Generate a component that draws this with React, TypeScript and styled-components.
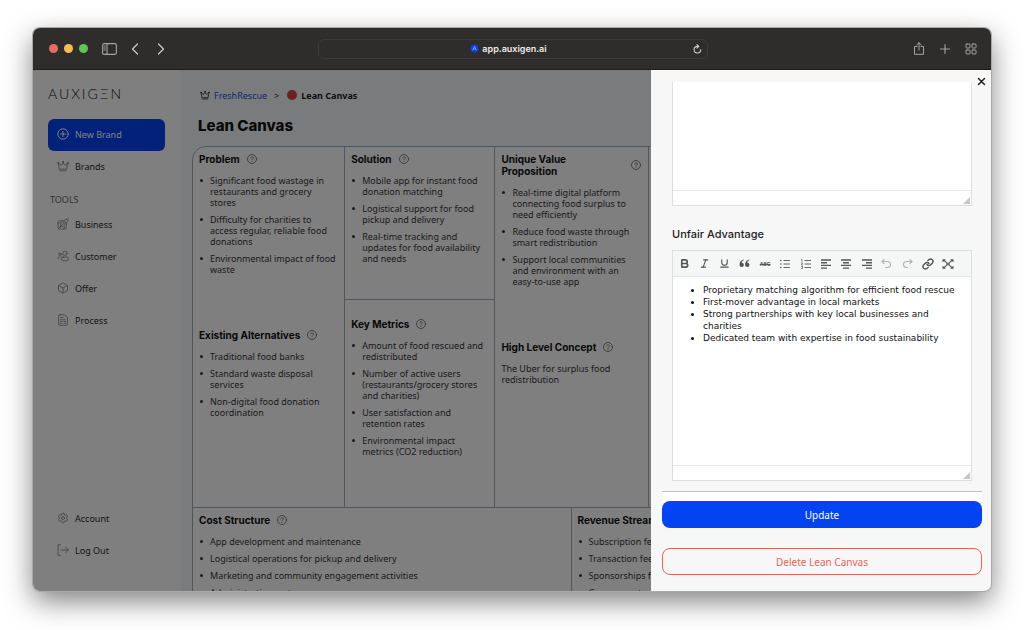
import React from "react";
import styled, { createGlobalStyle, css } from "styled-components";
import { Bold, Italic, Underline, Undo2, Redo2, Link as LinkIcon, Box, Settings } from "lucide-react";

const sans = `"Noto Sans", "Open Sans", sans-serif`;
const display = `Inter, "Noto Sans", sans-serif`;

const GlobalStyle = createGlobalStyle`
  *, *::before, *::after { box-sizing: border-box; }
  body { margin: 0; background: #fff; font-family: ${sans}; font-size: 9px; color: #363638; }
  button, input { font: inherit; color: inherit; }
  button { padding: 0; border: 0; background: none; cursor: pointer; }
  ul, h1, h2, p { margin: 0; padding: 0; }
`;

const Page = styled.div`
  display: flex;
  height: 100vh;
  padding: 28px 33px 39px;
  overflow: hidden;
`;

const Window = styled.div`
  flex: 1;
  min-width: 0;
  display: flex;
  flex-direction: column;
  border-radius: 7px;
  overflow: hidden;
  box-shadow: 0 0 0 1px #a9a9a9, 0 10px 28px rgba(0, 0, 0, 0.5);
`;

/* ---------- browser chrome ---------- */

const TitleBar = styled.header`
  flex: none;
  display: grid;
  grid-template-columns: 1fr 42% 1fr;
  align-items: center;
  height: 42px;
  padding: 0 14px 0 16px;
  background: #2f2d2b;
  border-bottom: 1px solid #1f1e1d;
  color: #a5a4a2;
`;

const ChromeGroup = styled.div<{ $end?: boolean }>`
  display: flex;
  align-items: center;
  gap: 14px;
  justify-content: ${(p) => (p.$end ? "flex-end" : "flex-start")};
`;

const History = styled.div`
  display: flex;
  gap: 18px;
`;

const Lights = styled.div`
  display: flex;
  gap: 6px;
`;

const Light = styled.span<{ $color: string }>`
  width: 9px;
  height: 9px;
  border-radius: 50%;
  background: ${(p) => p.$color};
`;

const ChromeButton = styled.button<{ $bright?: boolean }>`
  display: flex;
  color: ${(p) => (p.$bright ? "#cfcecd" : "#a5a4a2")};
`;

const AddressBar = styled.div`
  display: flex;
  align-items: center;
  height: 20px;
  padding: 0 5px;
  border: 1px solid #3c3b39;
  border-radius: 6px;
`;

const Address = styled.div`
  flex: 1;
  display: flex;
  align-items: center;
  justify-content: center;
  gap: 3px;
  font: 600 9px/12px ${display};
  color: #ececec;
`;

/* ---------- application shell ---------- */

const AppBody = styled.div`
  position: relative;
  flex: 1;
  min-height: 0;
  display: flex;
  background: #f2f6fb;
`;

const Sidebar = styled.aside`
  flex: none;
  display: flex;
  flex-direction: column;
  width: 148px;
  padding: 17px 16px 24px 15px;
  background: #fff;
`;

const Logo = styled.div`
  height: 14px;
  margin-bottom: 18px;
  font: 300 14px/14px Lato, ${sans};
  letter-spacing: 2px;
  color: #111;
`;

const NavItem = styled.a<{ $primary?: boolean }>`
  display: flex;
  align-items: center;
  gap: 6px;
  height: 32px;
  padding: 0 0 2px 9px;
  border-radius: 6px;
  text-decoration: none;
  color: #2a2a2a;
  ${(p) =>
    p.$primary &&
    css`
      background: #0442f5;
      color: #fff;
    `}
  svg {
    color: ${(p) => (p.$primary ? "#fff" : "#777")};
  }
`;

const NavLabel = styled.div`
  margin: 11px 0 3px;
  padding-left: 2px;
  line-height: 12px;
  color: #666;
`;

const Spacer = styled.div`
  flex: 1;
`;

const Main = styled.main`
  flex: 1;
  min-width: 0;
  overflow: hidden;
  padding: 18px 42px 0 11px;
`;

const Breadcrumb = styled.nav`
  display: flex;
  align-items: center;
  height: 14px;
  padding-left: 8px;
  gap: 4px;
  a {
    color: #2c4bdc;
    text-decoration: none;
  }
`;

const Separator = styled.span`
  padding: 0 4px 0 3px;
`;

const Dot = styled.span`
  width: 10px;
  height: 10px;
  border-radius: 50%;
  background: #d64045;
`;

const Crumb = styled.span`
  font-weight: 700;
  color: #1c1c1e;
`;

const Title = styled.h1`
  margin: 14px 0 10px;
  padding-left: 6px;
  font: 800 15px/20px ${display};
  color: #111;
`;

const Canvas = styled.div`
  border: 1px solid #a3adbb;
  border-radius: 14px 14px 0 0;
  background: #fff;
  overflow: hidden;
`;

const CanvasRow = styled.div<{ $cols: string; $tall?: boolean }>`
  display: grid;
  grid-template-columns: ${(p) => p.$cols};
  min-height: ${(p) => (p.$tall ? 360 : 120)}px;
  & + & {
    border-top: 1px solid #a3adbb;
  }
`;

const Column = styled.div`
  display: flex;
  flex-direction: column;
  min-width: 0;
  & + & {
    border-left: 1px solid #a3adbb;
  }
`;

const Section = styled.section<{ $ruled?: boolean; $top?: number }>`
  padding: ${(p) => p.$top ?? 0}px 7px 0 6px;
  ${(p) =>
    p.$ruled &&
    css`
      border-top: 1px solid #a3adbb;
    `}
`;

const SectionHead = styled.h2`
  display: flex;
  align-items: center;
  gap: 7px;
  font: 700 10px/12px ${display};
  color: #111;
  svg {
    flex: none;
    color: #666;
  }
`;

const HeadText = styled.span<{ $narrow?: boolean }>`
  ${(p) => p.$narrow && "flex: 1; padding-right: 40px;"}
`;

const SectionBody = styled.div<{ $height?: number }>`
  min-height: ${(p) => p.$height ?? 0}px;
  padding-top: 10px;
  line-height: 11px;
`;

const Bullets = styled.ul`
  display: flex;
  flex-direction: column;
  gap: 6px;
  padding-left: 11px;
  list-style: none;
`;

const Bullet = styled.li`
  position: relative;
  &::before {
    content: "";
    position: absolute;
    left: -10px;
    top: 4px;
    width: 3px;
    height: 3px;
    border-radius: 50%;
    background: currentColor;
  }
`;

const Scrim = styled.div`
  position: absolute;
  inset: 0;
  background: rgba(0, 0, 0, 0.5);
`;

/* ---------- drawer ---------- */

const Drawer = styled.aside`
  position: absolute;
  top: 0;
  right: 0;
  bottom: 0;
  display: flex;
  flex-direction: column;
  width: 340px;
  padding: 12px 9px 16px 11px;
  background: #f7f7f7;
`;

const CloseButton = styled.button`
  position: absolute;
  top: 6px;
  right: 4px;
  display: flex;
  color: #222;
`;

const DrawerScroll = styled.div`
  flex: 1;
  min-height: 0;
  display: flex;
  flex-direction: column;
  justify-content: flex-end;
  overflow: hidden;
  padding: 0 10px 10px;
  border-bottom: 1px solid #bfc1c4;
`;

const FieldLabel = styled.div`
  margin: 20px 0 8px;
  font: 500 11px/16px ${display};
  color: #222;
`;

const Editor = styled.div<{ $height: number }>`
  flex: none;
  display: flex;
  flex-direction: column;
  height: ${(p) => p.$height}px;
  border: 1px solid #dcdfe1;
  background: #fff;
`;

const Toolbar = styled.div`
  flex: none;
  display: flex;
  align-items: center;
  justify-content: space-between;
  height: 26px;
  padding: 0 13px 0 1px;
  background: #f5f7f7;
  border-bottom: 1px solid #e4e7e8;
`;

const ToolButton = styled.button<{ $muted?: boolean }>`
  display: flex;
  align-items: center;
  justify-content: center;
  width: 20px;
  height: 20px;
  color: ${(p) => (p.$muted ? "#b0b2b3" : "#555")};
`;

const Abc = styled.span`
  font: 700 5px/6px ${display};
  text-decoration: line-through;
`;

const EditorText = styled.div`
  flex: 1;
  padding: 7px 16px 0 10px;
  font: 9px/12px Verdana, "DejaVu Sans", sans-serif;
  color: #111;
  outline: none;
  ul {
    padding-left: 20px;
  }
`;

const StatusBar = styled.div`
  flex: none;
  display: flex;
  justify-content: flex-end;
  align-items: flex-end;
  height: 15px;
  padding: 1px;
  border-top: 1px solid #e4e7e8;
  color: #c4c6c7;
`;

const ActionArea = styled.div`
  flex: none;
  padding-top: 9px;
  margin-bottom: 20px;
  background: linear-gradient(#fff 20px, #f7f7f7 20px);
`;

const ActionButton = styled.button<{ $danger?: boolean }>`
  flex: none;
  width: 100%;
  height: 27px;
  border-radius: 8px;
  font-size: 10px;
  background: ${(p) => (p.$danger ? "transparent" : "#0343f2")};
  color: ${(p) => (p.$danger ? "#e2675c" : "#fff")};
  border: ${(p) => (p.$danger ? "1px solid #e2675c" : "0")};
`;

/* ---------- icons ---------- */

type IconProps = { w?: number; h?: number; sw?: number; box?: string; children: React.ReactNode };

const Icon = ({ w = 12, h = w, sw = 1, box = `0 0 ${w} ${h}`, children }: IconProps) => (
  <svg
    width={w}
    height={h}
    viewBox={box}
    fill="none"
    stroke="currentColor"
    strokeWidth={sw}
    strokeLinecap="round"
    strokeLinejoin="round"
    aria-hidden="true"
  >
    {children}
  </svg>
);

const Crown = ({ size = 12 }: { size?: number }) => (
  <Icon w={size} box="0 0 24 24" sw={size > 11 ? 1.5 : 2}>
    <path d="M4.500 17.500 L3 7.500 L8.500 10.500 L12 5.500 L15.500 10.500 L21 7.500 L19.500 17.500 Z M5 21.500 H19" />
    <circle cx="12" cy="4" r="1.2" />
    <circle cx="2.400" cy="6" r="1.2" />
    <circle cx="21.600" cy="6" r="1.2" />
  </Icon>
);

const Help = () => (
  <Icon w={10} sw={0.8}>
    <circle cx="5" cy="5" r="4.5" />
    <path d="M3.700 3.900 C3.800 2.300 6.300 2.300 6.300 3.900 C6.300 4.900 5 4.900 5 5.900 M5 7.200 V7.400" />
  </Icon>
);

const Rocket = () => (
  <Icon w={12} box="0 0 24 24" sw={1.4}>
    <path d="M6.500 17.500 C6.500 9.500 13 3.500 22.500 1.500 C20.500 11 14.500 17.500 6.500 17.500 Z M12 5.500 H4.500 Q2 5.500 2 8 V19.500 Q2 22 4.500 22 H16 Q18.500 22 18.500 19.500 V12 M2.500 21.500 L12.500 11.500 M7 9 L2 11 M15 17 L13.500 22" />
    <circle cx="15" cy="9" r="2" />
  </Icon>
);

const People = () => (
  <Icon w={12} box="0 0 25 24" sw={1.5}>
    <circle cx="16.500" cy="6.500" r="4.500" />
    <rect x="9" y="14" width="15" height="8" rx="4" />
    <circle cx="6" cy="8.500" r="2.800" />
    <path d="M2 18 C1 15 3 13.500 6.500 14" />
  </Icon>
);

const Sheet = () => (
  <Icon w={12} box="0 0 24 24" sw={1.5}>
    <path d="M6 1.500 H15 L21 7 V20 Q21 22.500 18.500 22.500 H5.500 Q3 22.500 3 20 V4.500 Q3 1.500 6 1.500 Z M7 7 H12 M7 11.500 H17 M7 15 H10 M14 15 H17 M7 18.500 H10 M14 18.500 H17" />
  </Icon>
);

const Exit = () => (
  <Icon w={12} box="0 0 24 24" sw={1.5}>
    <path d="M7 1.500 H2 V22.500 H7 M8 12 H22.500 M17 6.500 L22.500 12 L17 17.500" />
  </Icon>
);

const Lines = ({ align }: { align: "left" | "center" | "right" }) => {
  const short = { left: [0, 6], center: [2, 8], right: [4, 10] }[align];
  return (
    <Icon w={10} h={10} sw={1.4}>
      <path
        strokeLinecap="butt"
        d={`M0 1 H10 M${short[0]} 3.700 H${short[1]} M0 6.400 H10 M${short[0]} 9.100 H${short[1]}`}
      />
    </Icon>
  );
};

const ListIcon = ({ numbered }: { numbered?: boolean }) => (
  <Icon w={10} h={10} sw={0.9}>
    <path strokeLinecap="butt" d="M3.500 1.500 H10 M3.500 5 H10 M3.500 8.500 H10" />
    {numbered ? (
      <path strokeWidth="0.7" d="M0.500 0.500 H1 V2.500 M0.400 4 H1.500 L0.400 6 H1.500 M0.400 7.500 H1.500 V9.500 H0.400" />
    ) : (
      <path strokeWidth="1.3" d="M0.800 1.500 H1 M0.800 5 H1 M0.800 8.500 H1" />
    )}
  </Icon>
);

const Quote = () => (
  <svg width="11" height="9" viewBox="0 0 11 9" fill="currentColor" aria-hidden="true">
    <path d="M4.600 0.500 C2 1 0.500 3 0.500 5.800 A2.200 2.200 0 1 0 2.700 3.700 C2.800 2.600 3.500 1.700 4.600 1.500 Z M10.200 0.500 C7.600 1 6.100 3 6.100 5.800 A2.200 2.200 0 1 0 8.300 3.700 C8.400 2.600 9.100 1.700 10.200 1.500 Z" />
  </svg>
);

/* Back-curving arrow: head at the upper left, tail hooking under to the left. */
const Turn = ({ forward }: { forward?: boolean }) => (
  <Icon w={11} h={11} sw={1.1}>
    {forward ? (
      <path d="M10 3.500 H4.500 A3 3 0 0 0 4.500 9.500 H5.500 M7.800 1.300 L10 3.500 L7.800 5.700" />
    ) : (
      <path d="M1 3.500 H6.500 A3 3 0 0 1 6.500 9.500 H4.500 M3.200 1.300 L1 3.500 L3.200 5.700" />
    )}
  </Icon>
);

const Expand = () => (
  <Icon w={12} h={10} sw={1.1}>
    <path d="M1.500 1 L4.500 3.600 M10.500 1 L7.500 3.600 M1.500 9 L4.500 6.400 M10.500 9 L7.500 6.400 M1 2.500 V0.700 H3 M9 0.700 H11 V2.500 M1 7.500 V9.300 H3 M9 9.300 H11 V7.500" />
    <path d="M5 4.300 H7 V5.700 H5 Z" />
  </Icon>
);

const Grip = () => (
  <svg width="7" height="7" viewBox="0 0 7 7" fill="currentColor" aria-hidden="true">
    <path d="M7 0 V7 H0 Z" />
  </svg>
);

/* ---------- content ---------- */

type BlockProps = {
  title: string;
  items?: string[];
  text?: string;
  height?: number;
  top?: number;
  ruled?: boolean;
  narrow?: boolean;
};

const Block = ({ title, items, text, height, top, ruled, narrow }: BlockProps) => (
  <Section $top={top} $ruled={ruled}>
    <SectionHead>
      <HeadText $narrow={narrow}>{title}</HeadText>
      <Help />
    </SectionHead>
    <SectionBody $height={height}>
      {text && <p>{text}</p>}
      {items && (
        <Bullets>
          {items.map((item) => (
            <Bullet key={item}>{item}</Bullet>
          ))}
        </Bullets>
      )}
    </SectionBody>
  </Section>
);

const tools = [
  { label: "Bold", icon: <Bold size={11} strokeWidth={3.5} /> },
  { label: "Italic", icon: <Italic size={11} strokeWidth={2.5} /> },
  { label: "Underline", icon: <Underline size={11} strokeWidth={2.5} /> },
  { label: "Blockquote", icon: <Quote /> },
  { label: "Strikethrough", icon: <Abc>ABC</Abc> },
  { label: "Bulleted list", icon: <ListIcon /> },
  { label: "Numbered list", icon: <ListIcon numbered /> },
  { label: "Align left", icon: <Lines align="left" /> },
  { label: "Align center", icon: <Lines align="center" /> },
  { label: "Align right", icon: <Lines align="right" /> },
  { label: "Undo", icon: <Turn />, muted: true },
  { label: "Redo", icon: <Turn forward />, muted: true },
  { label: "Insert link", icon: <LinkIcon size={12} strokeWidth={2.8} /> },
  { label: "Fullscreen", icon: <Expand /> },
];

export default function App() {
  return (
    <>
      <GlobalStyle />
      <Page>
        <Window>
          <TitleBar>
            <ChromeGroup>
              <Lights>
                <Light $color="#ec6a5e" />
                <Light $color="#f4bf4f" />
                <Light $color="#61c554" />
              </Lights>
              <ChromeButton aria-label="Toggle sidebar">
                <Icon w={15} h={12} sw={1.1}>
                  <rect x="0.600" y="0.600" width="13.800" height="10.800" rx="1.600" />
                  <path d="M5 0.600 V11.400 M2 3 H3.300 M2 5 H3.300 M2 7 H3.300" />
                </Icon>
              </ChromeButton>
              <History>
                <ChromeButton $bright aria-label="Back">
                  <Icon w={8} h={12} sw={1.2}>
                    <path d="M6.500 1 L1.500 6 L6.500 11" />
                  </Icon>
                </ChromeButton>
                <ChromeButton $bright aria-label="Forward">
                  <Icon w={8} h={12} sw={1.2}>
                    <path d="M1.500 1 L6.500 6 L1.500 11" />
                  </Icon>
                </ChromeButton>
              </History>
            </ChromeGroup>
            <AddressBar>
              <Address>
                <svg width="9" height="9" viewBox="0 0 9 9" aria-hidden="true">
                  <circle cx="4.500" cy="4.500" r="4" fill="#0b3fe0" />
                  <path d="M2.700 6.300 L4.500 2.500 L6.300 6.300 M3.600 5 H5" stroke="#9db4ff" strokeWidth="0.8" fill="none" />
                </svg>
                app.auxigen.ai
              </Address>
              <ChromeButton $bright aria-label="Reload">
                <Icon w={9} h={10} sw={1.1}>
                  <path d="M7.700 5.800 A3.300 3.300 0 1 1 4.500 2.400 M4 0.700 L5.800 2.400 L4 4.100" />
                </Icon>
              </ChromeButton>
            </AddressBar>
            <ChromeGroup $end>
              <ChromeButton aria-label="Share">
                <Icon w={12} h={13}>
                  <path d="M4 4.500 H1.500 V12.300 H10.500 V4.500 H8 M6 8 V0.800 M3.800 2.900 L6 0.800 L8.200 2.900" />
                </Icon>
              </ChromeButton>
              <ChromeButton aria-label="New tab">
                <Icon w={12} sw={1.1}>
                  <path d="M6 1.500 V10.500 M1.500 6 H10.500" />
                </Icon>
              </ChromeButton>
              <ChromeButton aria-label="Tab overview">
                <Icon w={12}>
                  <rect x="1" y="1" width="4" height="4" rx="0.800" />
                  <rect x="7" y="1" width="4" height="4" rx="0.800" />
                  <rect x="1" y="7" width="4" height="4" rx="0.800" />
                  <rect x="7" y="7" width="4" height="4" rx="0.800" />
                </Icon>
              </ChromeButton>
            </ChromeGroup>
          </TitleBar>

          <AppBody>
            <Sidebar>
              <Logo aria-label="Auxigen">AUXIGΞN</Logo>
              <NavItem href="#new" $primary>
                <Icon w={12}>
                  <circle cx="6" cy="6" r="5.200" />
                  <path d="M6 3.500 V8.500 M3.500 6 H8.500" />
                </Icon>
                New Brand
              </NavItem>
              <NavItem href="#brands">
                <Crown />
                Brands
              </NavItem>
              <NavLabel>TOOLS</NavLabel>
              <NavItem href="#business">
                <Rocket />
                Business
              </NavItem>
              <NavItem href="#customer">
                <People />
                Customer
              </NavItem>
              <NavItem href="#offer">
                <Box size={12} strokeWidth={1.5} />
                Offer
              </NavItem>
              <NavItem href="#process">
                <Sheet />
                Process
              </NavItem>
              <Spacer />
              <NavItem href="#account">
                <Settings size={12} strokeWidth={1.5} />
                Account
              </NavItem>
              <NavItem href="#logout">
                <Exit />
                Log Out
              </NavItem>
            </Sidebar>

            <Main>
              <Breadcrumb>
                <Crown size={10} />
                <a href="#freshrescue">FreshRescue</a>
                <Separator>&gt;</Separator>
                <Dot />
                <Crumb>Lean Canvas</Crumb>
              </Breadcrumb>
              <Title>Lean Canvas</Title>
              <Canvas>
                <CanvasRow $cols="151fr 150fr 153fr 150fr 150fr" $tall>
                  <Column>
                    <Block
                      title="Problem"
                      top={6}
                      height={164}
                      items={[
                        "Significant food wastage in restaurants and grocery stores",
                        "Difficulty for charities to access regular, reliable food donations",
                        "Environmental impact of food waste",
                      ]}
                    />
                    <Block
                      title="Existing Alternatives"
                      items={[
                        "Traditional food banks",
                        "Standard waste disposal services",
                        "Non-digital food donation coordination",
                      ]}
                    />
                  </Column>
                  <Column>
                    <Block
                      title="Solution"
                      top={6}
                      height={134}
                      items={[
                        "Mobile app for instant food donation matching",
                        "Logistical support for food pickup and delivery",
                        "Real-time tracking and updates for food availability and needs",
                      ]}
                    />
                    <Block
                      title="Key Metrics"
                      top={18}
                      ruled
                      items={[
                        "Amount of food rescued and redistributed",
                        "Number of active users (restaurants/grocery stores and charities)",
                        "User satisfaction and retention rates",
                        "Environmental impact metrics (CO2 reduction)",
                      ]}
                    />
                  </Column>
                  <Column>
                    <Block
                      title="Unique Value Proposition"
                      top={6}
                      height={164}
                      narrow
                      items={[
                        "Real-time digital platform connecting food surplus to need efficiently",
                        "Reduce food waste through smart redistribution",
                        "Support local communities and environment with an easy-to-use app",
                      ]}
                    />
                    <Block title="High Level Concept" text="The Uber for surplus food redistribution" />
                  </Column>
                  <Column />
                  <Column />
                </CanvasRow>
                <CanvasRow $cols="1fr 1fr">
                  <Column>
                    <Block
                      title="Cost Structure"
                      top={6}
                      items={[
                        "App development and maintenance",
                        "Logistical operations for pickup and delivery",
                        "Marketing and community engagement activities",
                        "Administrative costs",
                      ]}
                    />
                  </Column>
                  <Column>
                    <Block
                      title="Revenue Streams"
                      top={6}
                      items={[
                        "Subscription fees",
                        "Transaction fees",
                        "Sponsorships from partners",
                        "Government grants",
                      ]}
                    />
                  </Column>
                </CanvasRow>
              </Canvas>
            </Main>

            <Scrim />

            <Drawer>
              <CloseButton aria-label="Close">
                <Icon w={11} sw={1.5}>
                  <path d="M2.500 2.500 L8.500 8.500 M8.500 2.500 L2.500 8.500" />
                </Icon>
              </CloseButton>
              <DrawerScroll>
                <Editor $height={231}>
                  <EditorText contentEditable suppressContentEditableWarning role="textbox" aria-label="Notes" />
                  <StatusBar>
                    <Grip />
                  </StatusBar>
                </Editor>
                <FieldLabel id="unfair-label">Unfair Advantage</FieldLabel>
                <Editor $height={231}>
                  <Toolbar role="toolbar">
                    {tools.map((t) => (
                      <ToolButton key={t.label} aria-label={t.label} $muted={t.muted}>
                        {t.icon}
                      </ToolButton>
                    ))}
                  </Toolbar>
                  <EditorText
                    contentEditable
                    suppressContentEditableWarning
                    role="textbox"
                    aria-labelledby="unfair-label"
                    spellCheck={false}
                  >
                    <ul>
                      <li>Proprietary matching algorithm for efficient food rescue</li>
                      <li>First-mover advantage in local markets</li>
                      <li>Strong partnerships with key local businesses and charities</li>
                      <li>Dedicated team with expertise in food sustainability</li>
                    </ul>
                  </EditorText>
                  <StatusBar>
                    <Grip />
                  </StatusBar>
                </Editor>
              </DrawerScroll>
              <ActionArea>
                <ActionButton>Update</ActionButton>
              </ActionArea>
              <ActionButton $danger>Delete Lean Canvas</ActionButton>
            </Drawer>
          </AppBody>
        </Window>
      </Page>
    </>
  );
}
